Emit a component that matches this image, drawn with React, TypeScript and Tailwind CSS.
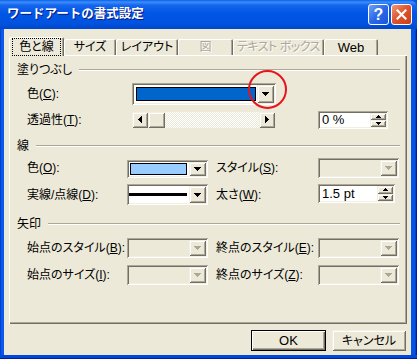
import React from "react";

const raised =
  "shadow-[inset_1px_1px_#F1EFE2,inset_-1px_-1px_#716F64,inset_2px_2px_#FFFFFF,inset_-2px_-2px_#ACA899]";
const sunken =
  "shadow-[inset_1px_1px_#ACA899,inset_-1px_-1px_#FFFFFF,inset_2px_2px_#716F64,inset_-2px_-2px_#F1EFE2]";

function DownArrow({ color = "#000" }: { color?: string }) {
  return (
    <svg width="7" height="4" viewBox="0 0 7 4" shapeRendering="crispEdges">
      <rect x="0" y="0" width="7" height="1" fill={color} />
      <rect x="1" y="1" width="5" height="1" fill={color} />
      <rect x="2" y="2" width="3" height="1" fill={color} />
      <rect x="3" y="3" width="1" height="1" fill={color} />
    </svg>
  );
}

function SmallUp() {
  return (
    <svg width="5" height="3" viewBox="0 0 5 3" shapeRendering="crispEdges">
      <rect x="2" y="0" width="1" height="1" fill="#000" />
      <rect x="1" y="1" width="3" height="1" fill="#000" />
      <rect x="0" y="2" width="5" height="1" fill="#000" />
    </svg>
  );
}

function SmallDown() {
  return (
    <svg width="5" height="3" viewBox="0 0 5 3" shapeRendering="crispEdges">
      <rect x="0" y="0" width="5" height="1" fill="#000" />
      <rect x="1" y="1" width="3" height="1" fill="#000" />
      <rect x="2" y="2" width="1" height="1" fill="#000" />
    </svg>
  );
}

function LeftArrow() {
  return (
    <svg width="4" height="7" viewBox="0 0 4 7" shapeRendering="crispEdges">
      <rect x="0" y="3" width="1" height="1" fill="#000" />
      <rect x="1" y="2" width="1" height="3" fill="#000" />
      <rect x="2" y="1" width="1" height="5" fill="#000" />
      <rect x="3" y="0" width="1" height="7" fill="#000" />
    </svg>
  );
}

function RightArrow() {
  return (
    <svg width="4" height="7" viewBox="0 0 4 7" shapeRendering="crispEdges">
      <rect x="0" y="0" width="1" height="7" fill="#000" />
      <rect x="1" y="1" width="1" height="5" fill="#000" />
      <rect x="2" y="2" width="1" height="3" fill="#000" />
      <rect x="3" y="3" width="1" height="1" fill="#000" />
    </svg>
  );
}

function Combo({
  className,
  disabled,
  children,
}: {
  className: string;
  disabled?: boolean;
  children?: React.ReactNode;
}) {
  return (
    <div
      className={`flex p-[2px] ${sunken} ${disabled ? "bg-[#ECE9D8]" : "bg-white"} ${className}`}
    >
      <div className="flex-1 min-w-0 flex">{children}</div>
      <div className={`w-[17px] flex items-center justify-center bg-[#ECE9D8] ${raised}`}>
        <DownArrow color={disabled ? "#ACA899" : "#000"} />
      </div>
    </div>
  );
}

function SpinEdit({ className, value }: { className: string; value: string }) {
  return (
    <div className={`flex p-[2px] bg-white ${sunken} ${className}`}>
      <div className="flex-1 flex items-center pl-[2px] text-[13px]">{value}</div>
      <div className="w-[16px] flex flex-col">
        <div className={`flex-1 flex items-center justify-center bg-[#ECE9D8] ${raised}`}>
          <SmallUp />
        </div>
        <div className={`flex-1 flex items-center justify-center bg-[#ECE9D8] ${raised}`}>
          <SmallDown />
        </div>
      </div>
    </div>
  );
}

function GroupHeader({ label, className }: { label: string; className: string }) {
  return (
    <div className={`flex items-center h-[16px] pl-[8px] pr-[7px] ${className}`}>
      <span className="whitespace-nowrap">{label}</span>
      <div className="flex-1 ml-[7px] h-[2px] border-t border-[#ACA899] bg-white" />
    </div>
  );
}

function Tab({
  label,
  className,
  disabled,
}: {
  label: string;
  className: string;
  disabled?: boolean;
}) {
  return (
    <div
      className={`mt-[2px] h-[16px] flex items-center justify-center rounded-t-[2px] shadow-[inset_1px_1px_#FFFFFF,inset_-1px_0_#716F64,inset_-2px_0_#ACA899] ${
        disabled ? "text-[#ACA899] [text-shadow:1px_1px_#FFFFFF]" : ""
      } ${className}`}
    >
      {label}
    </div>
  );
}

export default function App() {
  return (
    <div className="relative w-[417px] h-[359px] overflow-hidden whitespace-nowrap bg-[#0055E5] font-[family-name:'Liberation_Sans','Noto_Sans_CJK_JP',sans-serif] text-[12px] leading-none text-black [font-feature-settings:'palt']">
      {/* Title bar */}
      <div className="h-[29px] rounded-tr-[8px] flex items-center pl-[7px] pr-[5px] bg-[linear-gradient(180deg,#0A5FF0_0%,#3D8FF7_7%,#1665EE_18%,#0056E6_45%,#0053E0_80%,#0047CC_100%)]">
        <span className="flex-1 text-white font-bold text-[12.5px] [font-feature-settings:normal] [text-shadow:1px_1px_#0A1883]">
          ワードアートの書式設定
        </span>
        <div className="flex gap-[2px]">
          <div className="w-[21px] h-[21px] rounded-[3px] border border-white flex items-center justify-center bg-[linear-gradient(135deg,#6FA1F9_0%,#2A68E8_50%,#1A55D9_100%)] text-white font-bold text-[16px] font-[family-name:'Liberation_Sans',sans-serif]">
            ?
          </div>
          <div className="w-[21px] h-[21px] rounded-[3px] border border-white flex items-center justify-center bg-[linear-gradient(135deg,#F09A78_0%,#E0572D_45%,#C93D14_100%)]">
            <svg width="11" height="11" viewBox="0 0 11 11">
              <path d="M1.5 1.5L9.5 9.5M9.5 1.5L1.5 9.5" stroke="#fff" strokeWidth="2.2" strokeLinecap="square" />
            </svg>
          </div>
        </div>
      </div>

      {/* Body with borders */}
      <div className="h-[326px] flex">
        <div className="w-[4px] bg-[#0A58EE] shadow-[inset_1px_0_#0042C8]" />
        <div className="w-[407px] bg-[#ECE9D8] flex flex-col pl-[5px] pt-[8px]">
          {/* Tabs */}
          <div className="h-[18px] flex items-start">
            <div className="relative z-10 w-[55px] h-[19px] flex items-center justify-center bg-[#ECE9D8] rounded-t-[2px] shadow-[inset_1px_1px_#FFFFFF,inset_-1px_0_#716F64,inset_-2px_0_#ACA899]">
              <span className="px-[6px] py-[2px] border border-dotted border-black">色と線</span>
            </div>
            <Tab label="サイズ" className="w-[52px]" />
            <Tab label="レイアウト" className="w-[62px]" />
            <Tab label="図" className="w-[55px]" disabled />
            <Tab label="テキスト ボックス" className="w-[91px] tracking-[-0.5px]" disabled />
            <Tab label="Web" className="w-[54px] text-[13px]" />
          </div>

          {/* Panel */}
          <div className="w-[398px] h-[269px] flex flex-col shadow-[inset_1px_1px_#FFFFFF,inset_-1px_-1px_#716F64,inset_-2px_-2px_#ACA899]">
            <GroupHeader label="塗りつぶし" className="mt-[7px]" />

            {/* 色(C) */}
            <div className="mt-[5px] h-[22px] flex items-center pl-[18px]">
              <span className="w-[105px]">
                色(<span className="underline underline-offset-[1px]">C</span>):
              </span>
              <Combo className="w-[144px] h-[22px]">
                <div className="flex-1 p-[2px] pr-[1px]">
                  <div className="h-full border border-black bg-[#0066CC]" />
                </div>
              </Combo>
            </div>

            {/* 透過性(T) */}
            <div className="mt-[5px] h-[19px] flex items-center pl-[18px]">
              <span className="w-[105px]">
                透過性(<span className="underline underline-offset-[1px]">T</span>):
              </span>
              <div className="w-[143px] h-[16px] flex bg-[image:repeating-conic-gradient(#ECE9D8_0%_25%,#FFFFFF_0%_50%)] bg-[length:2px_2px]">
                <div className={`w-[16px] flex items-center justify-center bg-[#ECE9D8] ${raised}`}>
                  <LeftArrow />
                </div>
                <div className={`w-[17px] bg-[#ECE9D8] ${raised}`} />
                <div className="flex-1" />
                <div className={`w-[16px] flex items-center justify-center bg-[#ECE9D8] ${raised}`}>
                  <RightArrow />
                </div>
              </div>
              <SpinEdit className="ml-[43px] w-[70px] h-[18px]" value="0 %" />
            </div>

            <GroupHeader label="線" className="mt-[9px]" />

            {/* 色(O) / スタイル(S) */}
            <div className="mt-[4px] h-[20px] flex items-center pl-[18px]">
              <span className="w-[100px]">
                色(<span className="underline underline-offset-[1px]">O</span>):
              </span>
              <Combo className="w-[81px] h-[18px] self-end">
                <div className="flex-1 p-[1px] pr-[2px]">
                  <div className="h-full border border-black bg-[#99CCFF]" />
                </div>
              </Combo>
              <span className="ml-[8px] w-[102px]">
                スタイル(<span className="underline underline-offset-[1px]">S</span>):
              </span>
              <Combo className="w-[81px] h-[20px]" disabled />
            </div>

            {/* 実線/点線(D) / 太さ(W) */}
            <div className="mt-[6px] h-[21px] flex items-center pl-[18px]">
              <span className="w-[100px]">
                実線/点線(<span className="underline underline-offset-[1px]">D</span>):
              </span>
              <Combo className="w-[81px] h-[21px]">
                <div className="flex-1 flex items-center pr-[2px]">
                  <div className="w-full h-[3px] bg-black" />
                </div>
              </Combo>
              <span className="ml-[8px] w-[102px]">
                太さ(<span className="underline underline-offset-[1px]">W</span>):
              </span>
              <SpinEdit className="w-[77px] h-[19px] self-start" value="1.5 pt" />
            </div>

            <GroupHeader label="矢印" className="mt-[11px]" />

            {/* 始点のスタイル / 終点のスタイル */}
            <div className="mt-[6px] h-[20px] flex items-center pl-[18px]">
              <span className="w-[100px]">
                始点のスタイル(<span className="underline underline-offset-[1px]">B</span>):
              </span>
              <Combo className="w-[81px] h-[20px]" disabled />
              <span className="ml-[8px] w-[102px]">
                終点のスタイル(<span className="underline underline-offset-[1px]">E</span>):
              </span>
              <Combo className="w-[81px] h-[20px]" disabled />
            </div>

            {/* 始点のサイズ / 終点のサイズ */}
            <div className="mt-[7px] h-[20px] flex items-center pl-[18px]">
              <span className="w-[100px]">
                始点のサイズ(<span className="underline underline-offset-[1px]">I</span>):
              </span>
              <Combo className="w-[81px] h-[20px]" disabled />
              <span className="ml-[8px] w-[102px]">
                終点のサイズ(<span className="underline underline-offset-[1px]">Z</span>):
              </span>
              <Combo className="w-[81px] h-[20px]" disabled />
            </div>
          </div>

          {/* Buttons */}
          <div className="w-[398px] mt-[6px] flex justify-end gap-[6px] pr-[1px]">
            <div className="w-[75px] h-[21px] flex items-center justify-center bg-[#ECE9D8] border border-black shadow-[inset_1px_1px_#FFFFFF,inset_-1px_-1px_#716F64,inset_-2px_-2px_#ACA899] text-[13px]">
              OK
            </div>
            <div className={`w-[74px] h-[21px] flex items-center justify-center bg-[#ECE9D8] ${raised}`}>
              キャンセル
            </div>
          </div>
        </div>
        <div className="flex-1 bg-[#0055E5] shadow-[inset_-1px_0_#001EA0,inset_-2px_0_#0840C8]" />
      </div>
      <div className="h-[4px] bg-[#0048D8] shadow-[inset_0_-1px_#001EA0]" />

      {/* Red highlight circle */}
      <div className="absolute left-[248px] top-[70px] w-[39px] h-[39px] rounded-full border-2 border-[#E8141B]" />
    </div>
  );
}
